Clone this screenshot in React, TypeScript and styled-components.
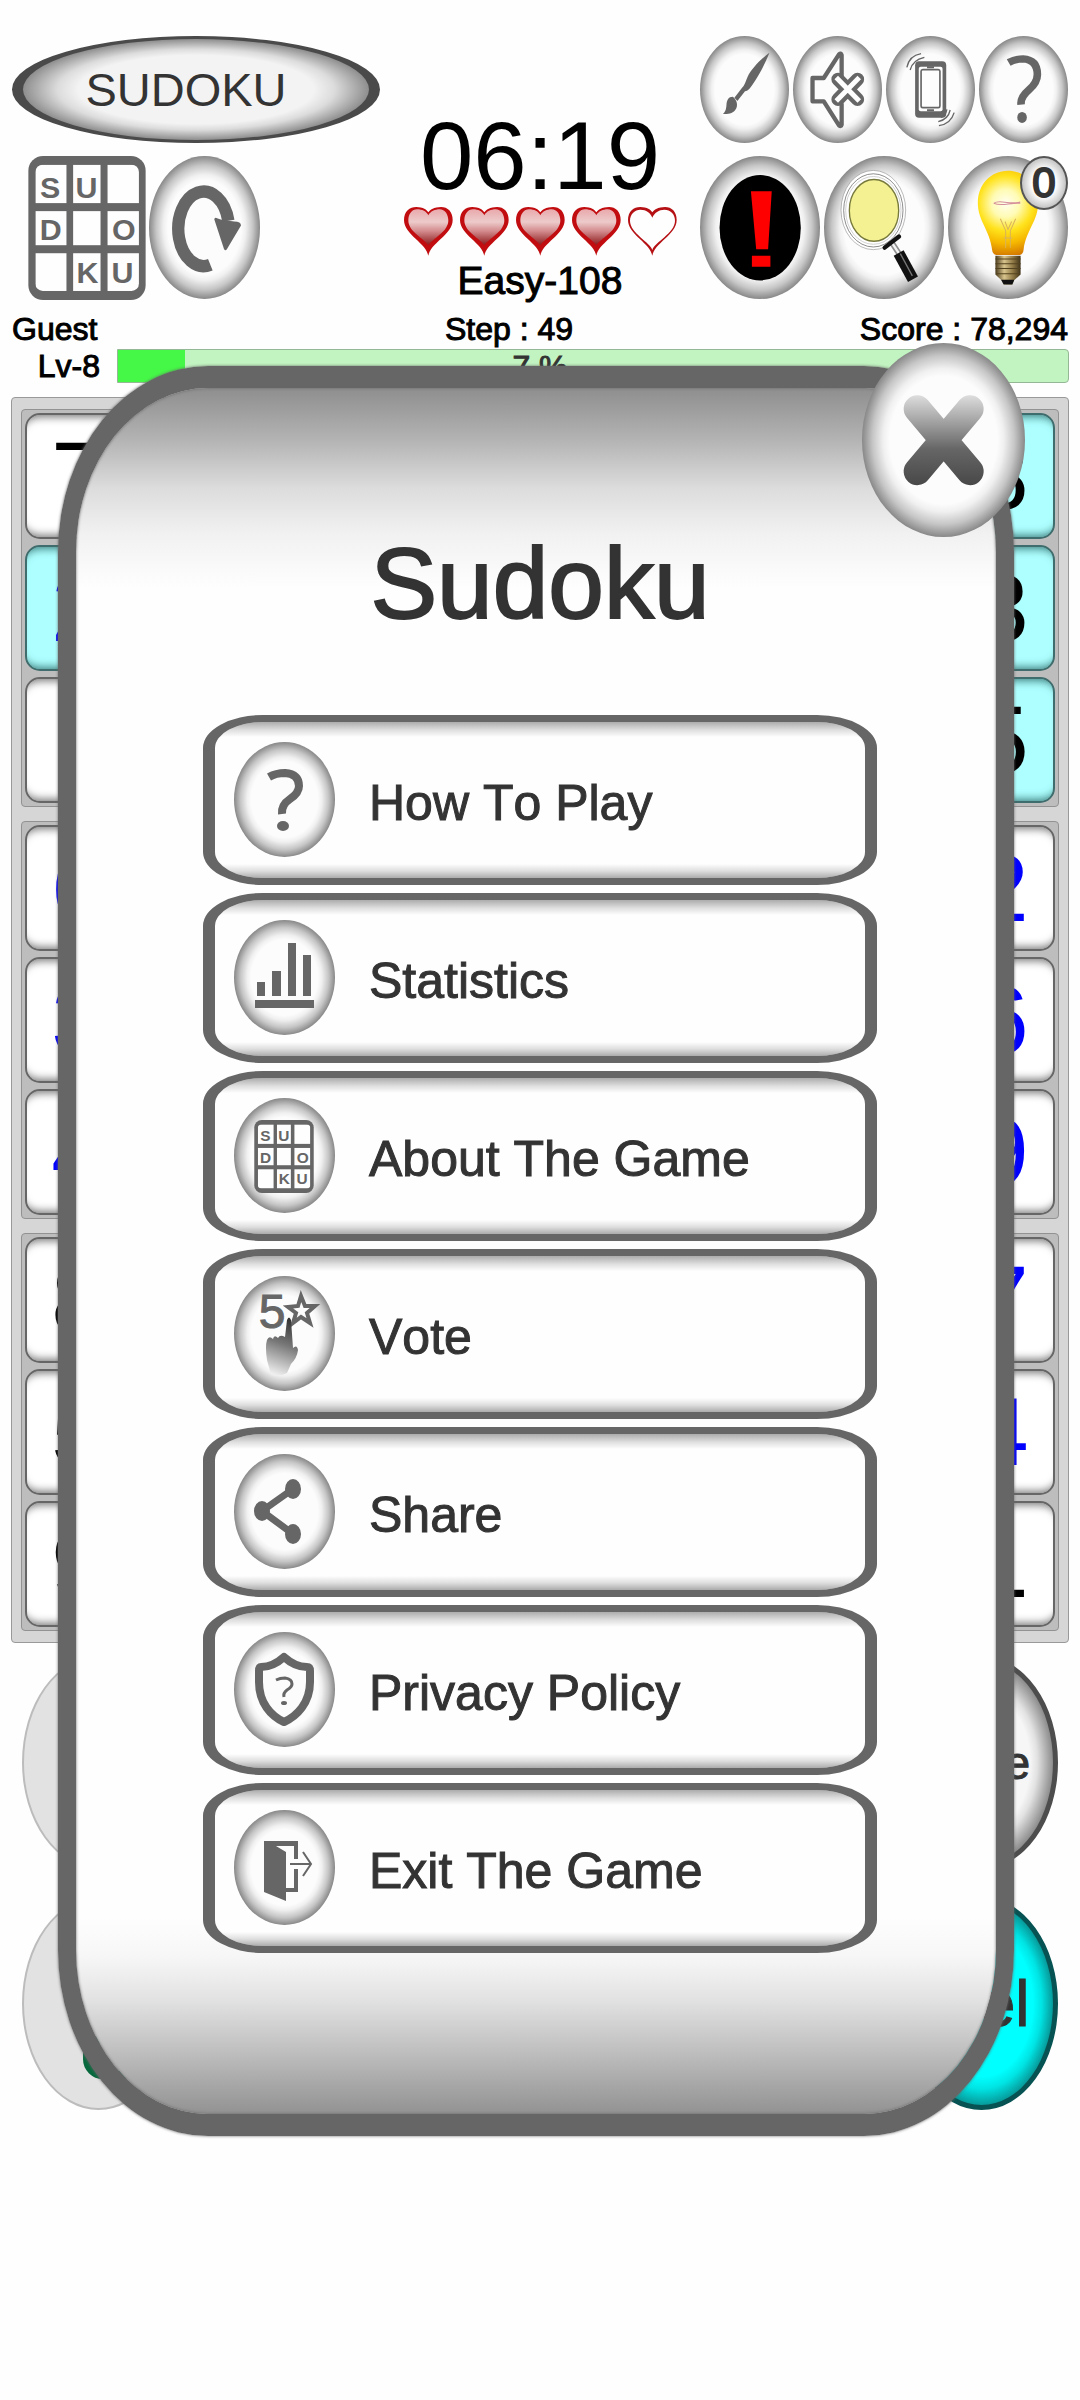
import React from 'react';
import styled, { createGlobalStyle, css } from 'styled-components';

const INK = '#666666';
const TEXT = '#333333';

const GlobalStyle = createGlobalStyle`
  * { box-sizing: border-box; }
  body {
    margin: 0;
    background: #fefefe;
    color: #000;
    font-family: 'Liberation Sans', Arial, sans-serif;
    font-kerning: none;
  }
  button { font-family: inherit; font-kerning: inherit; cursor: pointer; }
  h1, h2, p { margin: 0; font-weight: 400; }
`;

const Page = styled.div`
  position: relative;
  min-height: 100vh;
  padding: 36px 11px 0;
`;

const Header = styled.header`
  display: grid;
  grid-template-columns: auto 1fr auto;
  padding: 0 1px;
`;

const Column = styled.div`
  display: flex;
  flex-direction: column;
  gap: 13px;
`;

const Row = styled.div<{ $gap?: number; $indent?: number }>`
  display: flex;
  gap: ${(p) => p.$gap ?? 4}px;
  padding-left: ${(p) => p.$indent ?? 0}px;
`;

const NameButton = styled.button`
  width: 368px;
  height: 107px;
  padding: 0 20px 0 0;
  border: solid #4a4a4a;
  border-width: 3px 11px;
  border-radius: 50%;
  background: radial-gradient(closest-side, #f3f3f3 68%, #dcdcdc 80%, #8e8e8e 100%);
  color: ${TEXT};
  font-size: 47px;
  line-height: 48px;
`;

const roundFace = css`
  padding: 0;
  border: 0;
  border-radius: 50%;
  background: radial-gradient(closest-side, #fcfcfc 66%, #f0f0f0 74%, #c6c6c6 87%, #888 100%);
`;

const RoundButton = styled.button<{ $w: number; $h: number }>`
  ${roundFace}
  position: relative;
  width: ${(p) => p.$w}px;
  height: ${(p) => p.$h}px;
  & > svg { display: block; width: 100%; height: 100%; }
`;

const PlainButton = styled.button`
  padding: 0;
  border: 0;
  background: none;
  & > svg { display: block; }
`;

const Badge = styled.span`
  position: absolute;
  top: 0;
  right: 0;
  width: 48px;
  height: 54px;
  border: 2px solid #555;
  border-radius: 50%;
  background: radial-gradient(closest-side, #fff 55%, #c4c4c4 100%);
  color: ${TEXT};
  font-size: 42px;
  line-height: 50px;
  -webkit-text-stroke: 2px currentColor;
`;

const GameStatus = styled.div`
  display: flex;
  flex-direction: column;
  align-items: center;
  padding-top: 72px;
`;

const Timer = styled.div`
  font-size: 96px;
  line-height: 96px;
`;

const Lives = styled.div`
  display: flex;
  gap: 7px;
  margin: 3px 0 5px;
  & > svg { display: block; }
`;

const heavier = css`
  -webkit-text-stroke: 1px currentColor;
`;

const Level = styled.p`
  ${heavier}
  font-size: 39px;
  line-height: 40px;
`;

const Stats = styled.div`
  ${heavier}
  display: grid;
  grid-template-columns: 7fr 2fr 8fr;
  margin-top: 11px;
  padding: 0 1px;
  font-size: 32px;
  line-height: 34px;
  white-space: nowrap;
  & > :last-child { text-align: right; }
`;

const LevelRow = styled.div`
  display: flex;
  gap: 17px;
  margin-top: 3px;
  font-size: 32px;
  line-height: 34px;
`;

const LevelName = styled.span`
  ${heavier}
  width: 89px;
  text-align: right;
`;

const Progress = styled.div<{ $value: number }>`
  ${heavier}
  flex: 1;
  height: 34px;
  padding-right: 106px;
  border: 1px solid #93b893;
  border-radius: 0 4px 4px 0;
  background: linear-gradient(90deg, #45f747 ${(p) => p.$value}%, #c2f4c1 ${(p) => p.$value}%);
  color: ${TEXT};
  text-align: center;
`;

const BoardFrame = styled.main`
  display: grid;
  grid-template-columns: repeat(3, 1fr);
  gap: 14px 12px;
  margin-top: 14px;
  padding: 11px 9px;
  border: 1px solid #999;
  border-radius: 4px;
  background: #d6d6d6;
`;

const Block = styled.section`
  display: grid;
  grid-template-columns: repeat(3, 1fr);
  gap: 6px;
  padding: 3px;
  border: 1px solid #929292;
  border-radius: 4px;
  background: #bdbdbd;
`;

const Cell = styled.div<{ $lit?: boolean; $own?: boolean }>`
  height: 126px;
  border: 2px solid ${(p) => (p.$lit ? '#3f6c6c' : INK)};
  border-radius: 15px;
  background: ${(p) => (p.$lit ? '#aeffff' : '#fff')};
  box-shadow: inset 0 10px 8px -8px ${(p) => (p.$lit ? '#3f7f7f' : '#777')},
    inset 0 -10px 8px -8px ${(p) => (p.$lit ? '#3f7f7f' : '#777')};
  color: ${(p) => (p.$own ? '#0000ff' : '#000')};
  font-size: 96px;
  line-height: 122px;
  text-align: center;
`;

const Pads = styled.footer`
  display: grid;
  gap: 28px;
  padding: 13px 11px 0;
`;

const PadRow = styled.div`
  display: flex;
  justify-content: space-between;
`;

const Pad = styled.button<{ $tone: 'off' | 'plain' | 'cyan'; $size?: number }>`
  ${heavier}
  width: 153px;
  height: 213px;
  padding: 0;
  border-radius: 50%;
  border: ${(p) =>
    p.$tone === 'off' ? '2px solid #bcbcbc' : p.$tone === 'cyan' ? '5px solid #075353' : '5px solid #4d4d4d'};
  background: ${(p) =>
    p.$tone === 'off'
      ? '#e2e2e2'
      : p.$tone === 'cyan'
        ? 'radial-gradient(closest-side, #00ffff 72%, #00e4e4 84%, #079a9a 100%)'
        : 'radial-gradient(closest-side, #f6f6f6 68%, #e2e2e2 78%, #8c8c8c 100%)'};
  color: ${TEXT};
  font-size: ${(p) => p.$size ?? 46}px;
  & > svg { display: block; width: 100%; height: 100%; }
`;

const Dialog = styled.section`
  position: absolute;
  top: 366px;
  left: 58px;
  right: 66px;
  padding: 145px 119px 161px 127px;
  border: solid ${INK};
  border-width: 22px 18px;
  border-radius: 150px / 186px;
  background:
    linear-gradient(180deg, #8e8e8e 0, #b2b2b2 50px, #dcdcdc 100px, #f1f1f1 145px, #fefefe 200px, transparent 200px),
    linear-gradient(0deg, #929292 0, #c4c4c4 70px, #e2e2e2 114px, #f6f6f6 156px, #fefefe 196px);
  background-origin: padding-box;
  background-clip: padding-box;
  box-shadow: 0 0 3px ${INK}, inset 0 0 3px ${INK};
`;

const CloseButton = styled(RoundButton)`
  position: absolute;
  top: -45px;
  right: -29px;
`;

const Title = styled.h1`
  margin-bottom: 82px;
  color: ${TEXT};
  font-size: 100px;
  line-height: 100px;
  text-align: center;
  -webkit-text-stroke: 2px currentColor;
`;

const Menu = styled.nav`
  display: grid;
  gap: 8px;
`;

const MenuButton = styled.button`
  ${heavier}
  display: flex;
  align-items: center;
  gap: 34px;
  height: 170px;
  padding: 0 19px 2px;
  border: solid ${INK};
  border-width: 7px 12px;
  border-radius: 60px / 33px;
  background:
    linear-gradient(180deg, #acacac 0, #dedede 8px, #fefefe 15px, transparent 15px),
    linear-gradient(0deg, #acacac 0, #dedede 7px, #fefefe 14px);
  background-origin: padding-box;
  background-clip: padding-box;
  color: ${TEXT};
  font-size: 50px;
  line-height: 60px;
  text-align: left;
`;

const MenuIcon = styled.span`
  ${roundFace}
  width: 101px;
  height: 115px;
  -webkit-text-stroke: 0;
  & > svg { display: block; width: 100%; height: 100%; }
`;

const MenuText = styled.span`
  padding-top: 8px;
`;

function LogoArt() {
  const cols = [[21, 93], [134, 82], [237, 94]];
  const rows = [[26, 115], [165, 102], [291, 113]];
  const letters: [string, number, number][] = [
    ['S', 65, 125], ['U', 174, 125], ['D', 67, 251], ['O', 286, 251], ['K', 177, 380], ['U', 282, 380],
  ];
  return (
    <>
      <rect width="351" height="431" rx="44" fill={INK} />
      <clipPath id="logoInner"><rect x="21" y="26" width="310" height="378" rx="22" /></clipPath>
      <g clipPath="url(#logoInner)">
        {rows.map(([y, h]) => cols.map(([x, w]) => (
          <rect key={`${x}-${y}`} x={x} y={y} width={w} height={h} fill="#fefefe" />
        )))}
      </g>
      <g fill={INK} fontFamily="Liberation Sans, Arial, sans-serif" fontWeight="700" fontSize="91" textAnchor="middle">
        {letters.map(([t, x, y]) => <text key={`${t}${x}`} x={x} y={y}>{t}</text>)}
      </g>
    </>
  );
}

function QuestionArt() {
  return (
    <>
      <path d="M35 35Q42 31 51 31Q65 32 65 44Q65 51 56 57Q47 63 48 72" fill="none" stroke={INK} strokeWidth="8" />
      <ellipse cx="49" cy="84" rx="6" ry="5" fill={INK} />
    </>
  );
}

function Heart({ full }: { full: boolean }) {
  const outer = 'M142 468C138 430 69 404 69 360C69 334 86 321 106 321C126 321 138 330 142 337C146 330 160 321 180 321C200 321 215 335 215 360C215 404 146 430 142 468Z';
  return (
    <svg width="49" height="49" viewBox="69 321 147 147" aria-hidden="true">
      <defs>
        <linearGradient id="heartFill" x1="0" y1="0" x2="0" y2="1">
          <stop offset="0" stopColor="#e9a9ac" />
          <stop offset="0.35" stopColor="#edcbcb" />
          <stop offset="0.6" stopColor="#d48c8e" />
          <stop offset="1" stopColor="#8a1a1c" />
        </linearGradient>
      </defs>
      <path d={outer} fill={full ? '#c20d10' : '#b51013'} />
      {full ? (
        <path d="M142 436C130 416 82 396 82 361C82 342 93 328 108 328C124 328 136 334 142 346C148 334 162 328 176 328C192 328 202 344 202 361C202 396 154 416 142 436Z" fill="url(#heartFill)" />
      ) : (
        <path d="M142 450C136 426 75 400 75 362C75 342 90 329 106 329C124 329 136 338 142 353C148 338 162 329 178 329C196 329 210 342 210 362C210 400 148 426 142 450Z" fill="#fefefe" />
      )}
    </svg>
  );
}

function BrushArt() {
  return (
    <svg viewBox="59 48 269 321" preserveAspectRatio="none" aria-hidden="true">
      <g fill={INK}>
        <path d="M269 98C246 114 214 146 203 170C197 184 194 196 185 205L163 233L172 243L195 214C206 212 211 203 217 195C238 166 256 130 269 98Z" />
        <path d="M158 230C145 230 140 240 139 254C138 268 136 275 128 282C146 283 160 280 167 268C174 258 172 240 158 230Z" />
      </g>
    </svg>
  );
}

function MuteArt() {
  return (
    <svg viewBox="337 48 269 321" preserveAspectRatio="none" aria-hidden="true">
      <path d="M484 172V105Q482 98 476 103L430 174H396V244H430L476 316Q482 321 484 314V250" fill="none" stroke={INK} strokeWidth="13" strokeLinejoin="round" />
      <path d="M473 178L532 238M532 178L473 238" stroke={INK} strokeWidth="40" strokeLinecap="round" />
      <path d="M473 178L532 238M532 178L473 238" stroke="#fdfdfd" strokeWidth="15" strokeLinecap="square" />
    </svg>
  );
}

function VibrateArt() {
  return (
    <svg viewBox="616 48 269 321" preserveAspectRatio="none" aria-hidden="true">
      <rect x="704" y="124" width="94" height="169" rx="12" fill={INK} />
      <rect x="715" y="140" width="72" height="134" rx="6" fill="#fdfdfd" />
      <rect x="722" y="149" width="57" height="114" rx="5" fill="none" stroke={INK} strokeWidth="5" />
      <path d="M740 142H761M740 271H761" stroke={INK} strokeWidth="6" />
      <path d="M679 142Q686 107 722 101M689 150Q696 120 732 112M822 278Q812 312 776 317M810 270Q804 298 774 305M800 268Q796 288 782 292" fill="none" stroke={INK} strokeWidth="4" />
    </svg>
  );
}

function AlertArt() {
  return (
    <svg viewBox="58 408 363 431" preserveAspectRatio="none" aria-hidden="true">
      <ellipse cx="240" cy="624" rx="123" ry="159" fill="#000" />
      <path d="M212 514H275L264 689H228ZM215 709H271V742H215Z" fill="#ff0000" />
    </svg>
  );
}

function MagnifierArt() {
  return (
    <svg viewBox="432 411 360 426" preserveAspectRatio="none" aria-hidden="true">
      <path d="M632 664L660 706" stroke="#8d8d8d" strokeWidth="17" />
      <path d="M632 664L660 706" stroke="#f2f2f2" strokeWidth="7" />
      <ellipse cx="580" cy="572" rx="97" ry="118" fill="#fff" stroke="#999" strokeWidth="2" />
      <ellipse cx="580" cy="573" rx="89" ry="109" fill="#fff" stroke="#555" strokeWidth="2" />
      <ellipse cx="580" cy="573" rx="83" ry="101" fill="#fff" stroke="#bbb" strokeWidth="2" />
      <ellipse cx="582" cy="573" rx="74" ry="92" fill="#f3f192" stroke="#77793c" strokeWidth="4" />
      <path d="M614 684L657 651" stroke="#111" strokeWidth="13" strokeLinecap="round" />
      <path d="M656 700L699 778" stroke="#111" strokeWidth="34" />
      <path d="M661 702L697 768" stroke="#777" strokeWidth="4" />
    </svg>
  );
}

function BulbArt() {
  return (
    <svg viewBox="804 411 362 426" preserveAspectRatio="none" aria-hidden="true">
      <defs>
        <radialGradient id="bulbGlow" gradientUnits="userSpaceOnUse" cx="978" cy="552" r="165">
          <stop offset="0" stopColor="#fffef0" />
          <stop offset="0.25" stopColor="#fffbb4" />
          <stop offset="0.5" stopColor="#ffe21c" />
          <stop offset="0.72" stopColor="#f6b800" />
          <stop offset="1" stopColor="#cc6c00" />
        </radialGradient>
        <linearGradient id="bulbBase">
          <stop offset="0" stopColor="#493a1d" />
          <stop offset="0.35" stopColor="#d8c48d" />
          <stop offset="0.7" stopColor="#8d7744" />
          <stop offset="1" stopColor="#3f3219" />
        </linearGradient>
      </defs>
      <path d="M985 455C932 455 894 497 894 550C894 605 930 630 937 690Q938 703 950 706H1020Q1031 703 1032 690C1040 630 1076 605 1076 550C1076 497 1038 455 985 455Z" fill="url(#bulbGlow)" />
      <path d="M942 552C960 538 985 558 1022 548M942 552C965 562 990 550 1022 552" fill="none" stroke="#d58f9a" strokeWidth="3" />
      <path d="M962 598L978 634V684M1008 598L992 634V684M972 655H998M976 606L985 630L996 606" fill="none" stroke="#d8b35c" strokeWidth="3" />
      <path d="M947 708H1023V764L1003 782L998 794H972L966 782L947 764Z" fill="url(#bulbBase)" />
      <path d="M947 718H1023M947 732H1023M947 746H1023M950 762H1020" stroke="#54431f" strokeWidth="3" />
      <path d="M964 780H1004L998 794H972Z" fill="#111" />
    </svg>
  );
}

const menu: { label: string; art: React.ReactNode }[] = [
  { label: 'How To Play', art: <QuestionArt /> },
  {
    label: 'Statistics',
    art: <path d="M23 62h8v14h-8zM38 51h9v25h-9zM54 23h8v53h-8zM69 35h8v41h-8zM21 80h59v8H21z" fill={INK} />,
  },
  {
    label: 'About The Game',
    art: <svg x="20" y="22" width="60" height="73" viewBox="0 0 351 431"><LogoArt /></svg>,
  },
  {
    label: 'Vote',
    art: (
      <>
        <defs>
          <linearGradient id="hand" x1="0.6" y1="0" x2="0.4" y2="1">
            <stop offset="0" stopColor="#333" />
            <stop offset="0.45" stopColor="#777" />
            <stop offset="1" stopColor="#eee" />
          </linearGradient>
        </defs>
        <text x="38" y="52" fill={INK} stroke={INK} strokeWidth="1" fontSize="48" fontFamily="Liberation Sans, sans-serif" textAnchor="middle">5</text>
        <path d="M67 20L71 30L81 30L73 37L76 47L67 41L59 47L62 37L54 31L64 30Z" fill="none" stroke={INK} strokeWidth="4" />
        <path d="M53 44Q55 39 57 44L59 72Q63 68 64 74Q63 82 57 88L53 97Q46 101 37 99L33 84Q31 70 33 64Q35 59 39 63Q40 58 44 62Q46 58 51 61Z" fill="url(#hand)" />
      </>
    ),
  },
  {
    label: 'Share',
    art: (
      <g fill={INK}>
        <path d="M59 35L28 57L59 80" fill="none" stroke={INK} strokeWidth="7" />
        <ellipse cx="28" cy="57" rx="8" ry="10" />
        <ellipse cx="59" cy="35" rx="8" ry="10" />
        <ellipse cx="59" cy="80" rx="8" ry="10" />
      </g>
    ),
  },
  {
    label: 'Privacy Policy',
    art: (
      <>
        <path d="M50 25Q39 35 27 35Q25 35 25 39V50C25 71 37 84 50 90C63 84 76 71 76 50V39Q76 35 73 35Q61 35 50 25Z" fill="none" stroke={INK} strokeWidth="8" strokeLinejoin="round" />
        <path d="M42 48Q46 46 51 46Q58 47 58 52Q58 55 53 58Q49 61 50 65" fill="none" stroke={INK} strokeWidth="3" />
        <ellipse cx="50" cy="71" rx="3" ry="2" fill={INK} />
      </>
    ),
  },
  {
    label: 'Exit The Game',
    art: (
      <g fill={INK}>
        <path d="M30 31H64V49H60V36H42L52 42V78H60V59H64V82H52V91L30 82Z" />
        <path d="M56 54H76M69 42L77 54L69 66" fill="none" stroke={INK} strokeWidth="2" />
      </g>
    ),
  },
];

type CellData = { value: string; lit?: boolean; own?: boolean };

const firstColumn: CellData[] = [
  { value: '7' }, { value: '2', lit: true, own: true }, { value: '1', own: true },
  { value: '6', own: true }, { value: '3', own: true }, { value: '4', own: true },
  { value: '8' }, { value: '5' }, { value: '9' },
];
const lastColumn: CellData[] = [
  { value: '8', lit: true }, { value: '3', lit: true }, { value: '5', lit: true },
  { value: '2', own: true }, { value: '6', own: true }, { value: '9', own: true },
  { value: '7', own: true }, { value: '4', own: true }, { value: '1' },
];

function cellAt(row: number, col: number): CellData {
  if (col === 0) return firstColumn[row];
  if (col === 8) return lastColumn[row];
  return { value: '' };
}

function Board() {
  const three = [0, 1, 2];
  return (
    <BoardFrame>
      {three.map((br) => three.map((bc) => (
        <Block key={`${br}${bc}`}>
          {three.map((r) => three.map((c) => {
            const cell = cellAt(br * 3 + r, bc * 3 + c);
            return <Cell key={`${r}${c}`} $lit={cell.lit} $own={cell.own}>{cell.value}</Cell>;
          }))}
        </Block>
      )))}
    </BoardFrame>
  );
}

export default function App() {
  return (
    <>
      <GlobalStyle />
      <Page>
        <Header>
          <Column>
            <NameButton>SUDOKU</NameButton>
            <Row $gap={3} $indent={16}>
              <PlainButton aria-label="Sudoku">
                <svg width="118" height="144" viewBox="0 0 351 431"><LogoArt /></svg>
              </PlainButton>
              <RoundButton $w={111} $h={143} aria-label="Restart">
                <svg viewBox="444 411 333 426" preserveAspectRatio="none" aria-hidden="true">
                  <path d="M628 735A76 111 0 1 1 682 604" fill="none" stroke={INK} strokeWidth="37" />
                  <path d="M640 600Q640 592 650 597L664 602L700 606Q720 606 720 618L678 688Q673 696 669 688Z" fill={INK} />
                </svg>
              </RoundButton>
            </Row>
          </Column>
          <GameStatus>
            <Timer>06:19</Timer>
            <Lives>
              {[1, 2, 3, 4, 5].map((n) => <Heart key={n} full={n < 5} />)}
            </Lives>
            <Level>Easy-108</Level>
          </GameStatus>
          <Column>
            <Row>
              <RoundButton $w={89} $h={107} aria-label="Theme"><BrushArt /></RoundButton>
              <RoundButton $w={89} $h={107} aria-label="Sound"><MuteArt /></RoundButton>
              <RoundButton $w={89} $h={107} aria-label="Vibration"><VibrateArt /></RoundButton>
              <RoundButton $w={89} $h={107} aria-label="Help">
                <svg viewBox="4 -1 93 117" preserveAspectRatio="none" aria-hidden="true">
                  <path d="M35 28Q42 24 50 24Q65 25 65 41Q65 50 56 58Q47 66 48 74" fill="none" stroke={INK} strokeWidth="8" />
                  <ellipse cx="49" cy="88" rx="5" ry="6" fill={INK} />
                </svg>
              </RoundButton>
            </Row>
            <Row>
              <RoundButton $w={120} $h={143} aria-label="Check"><AlertArt /></RoundButton>
              <RoundButton $w={120} $h={143} aria-label="Search"><MagnifierArt /></RoundButton>
              <RoundButton $w={120} $h={143} aria-label="Hints">
                <BulbArt />
                <Badge>0</Badge>
              </RoundButton>
            </Row>
          </Column>
        </Header>
        <Stats>
          <span>Guest</span>
          <span>Step : 49</span>
          <span>Score : 78,294</span>
        </Stats>
        <LevelRow>
          <LevelName>Lv-8</LevelName>
          <Progress $value={7} role="progressbar" aria-valuenow={7} aria-valuemin={0} aria-valuemax={100}>7 %</Progress>
        </LevelRow>
        <Board />
        <Pads>
          <PadRow>
            <Pad $tone="off" disabled aria-label="Undo" />
            <Pad $tone="plain">Note</Pad>
          </PadRow>
          <PadRow>
            <Pad $tone="off" disabled aria-label="Pencil">
              <svg viewBox="0 0 149 209" aria-hidden="true">
                <rect x="63" y="140" width="50" height="36" rx="16" fill="none" stroke="#07693d" strokeWidth="8" />
              </svg>
            </Pad>
            <Pad $tone="cyan" $size={64}>Del</Pad>
          </PadRow>
        </Pads>
        <Dialog role="dialog" aria-labelledby="dialog-title">
          <Title id="dialog-title">Sudoku</Title>
          <Menu>
            {menu.map(({ label, art }) => (
              <MenuButton key={label}>
                <MenuIcon><svg viewBox="0 0 101 115" aria-hidden="true">{art}</svg></MenuIcon>
                <MenuText>{label}</MenuText>
              </MenuButton>
            ))}
          </Menu>
          <CloseButton $w={163} $h={194} aria-label="Close">
            <svg viewBox="66 40 489 580" preserveAspectRatio="none" aria-hidden="true">
              <defs>
                <linearGradient id="cross" gradientUnits="userSpaceOnUse" x1="0" y1="195" x2="0" y2="465">
                  <stop offset="0" stopColor="#dedede" />
                  <stop offset="0.3" stopColor="#a2a2a2" />
                  <stop offset="0.6" stopColor="#666" />
                  <stop offset="1" stopColor="#484848" />
                </linearGradient>
              </defs>
              <path d="M232 237L390 424M390 237L232 424" stroke="url(#cross)" strokeWidth="82" strokeLinecap="round" />
            </svg>
          </CloseButton>
        </Dialog>
      </Page>
    </>
  );
}
